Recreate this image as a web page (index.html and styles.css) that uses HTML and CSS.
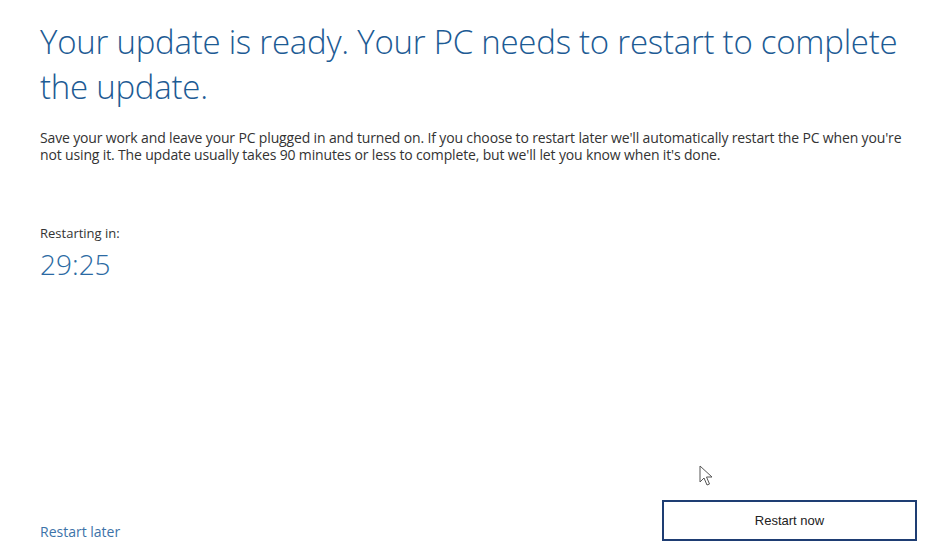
FILE: index.html
```html
<!DOCTYPE html>
<html lang="en">
<head>
    <meta charset="UTF-8">
    <title>Windows Update</title>
    <link rel="stylesheet" href="styles.css">
</head>
<body>
    <div class="screen">
        <div class="content">
            <h1 class="title">Your update is ready. Your PC needs to restart to complete the update.</h1>
            <p class="info">Save your work and leave your PC plugged in and turned on. If you choose to restart later we'll automatically restart the PC when you're not using it. The update usually takes 90 minutes or less to complete, but we'll let you know when it's done.</p>

            <div class="countdown">
                <div class="countdown-label">Restarting in:</div>
                <div class="countdown-time" id="timer">29:25</div>
            </div>
        </div>

        <div class="footer">
            <a class="later" href="#">Restart later</a>
            <button class="restart-btn">Restart now</button>
        </div>

        <!-- mouse pointer -->
        <svg class="pointer" width="14" height="22" viewBox="0 0 14 22">
            <path d="M1 1 L1 17 L5 13 L8 20 L10.5 19 L7.5 12 L13 12 Z" fill="#fff" stroke="#555" stroke-width="1" stroke-linejoin="round"/>
        </svg>
    </div>
</body>
</html>
```

FILE: styles.css
```css
html, body {
    margin: 0;
    padding: 0;
    background: #fff;
}
.screen {
    position: relative;
    width: 946px;
    height: 555px;
    display: flex;
    flex-direction: column;
    justify-content: space-between;
    box-sizing: border-box;
    padding: 0 29px 0 40px;
    font-family: "Open Sans", "Noto Sans", sans-serif;
}
.title {
    margin: 19px 0 0 0;
    font-size: 33px;
    font-weight: 300;
    line-height: 45px;
    color: #1d5b94;
    letter-spacing: -0.25px;
}
.info {
    margin: 20px 0 0 0;
    padding-right: 3px;
    font-size: 14px;
    line-height: 17px;
    color: #333;
    letter-spacing: -0.15px;
}
.countdown {
    margin-top: 62px;
}
.countdown-label {
    font-size: 13px;
    color: #333;
    line-height: 17px;
}
.countdown-time {
    font-size: 28px;
    font-weight: 300;
    color: #2b6aa3;
    line-height: 36px;
    margin-top: 4px;
}
.footer {
    display: flex;
    justify-content: space-between;
    align-items: flex-end;
    padding-bottom: 14px;
}
.later {
    font-size: 14px;
    color: #3d73a8;
    text-decoration: none;
}
.restart-btn {
    width: 255px;
    height: 41px;
    background: #fff;
    border: 2px solid #1e3d73;
    font-family: "Liberation Sans", Arial, sans-serif;
    font-size: 13px;
    color: #222;
    padding: 0;
}
.pointer {
    position: absolute;
    left: 699px;
    top: 465px;
}
```
